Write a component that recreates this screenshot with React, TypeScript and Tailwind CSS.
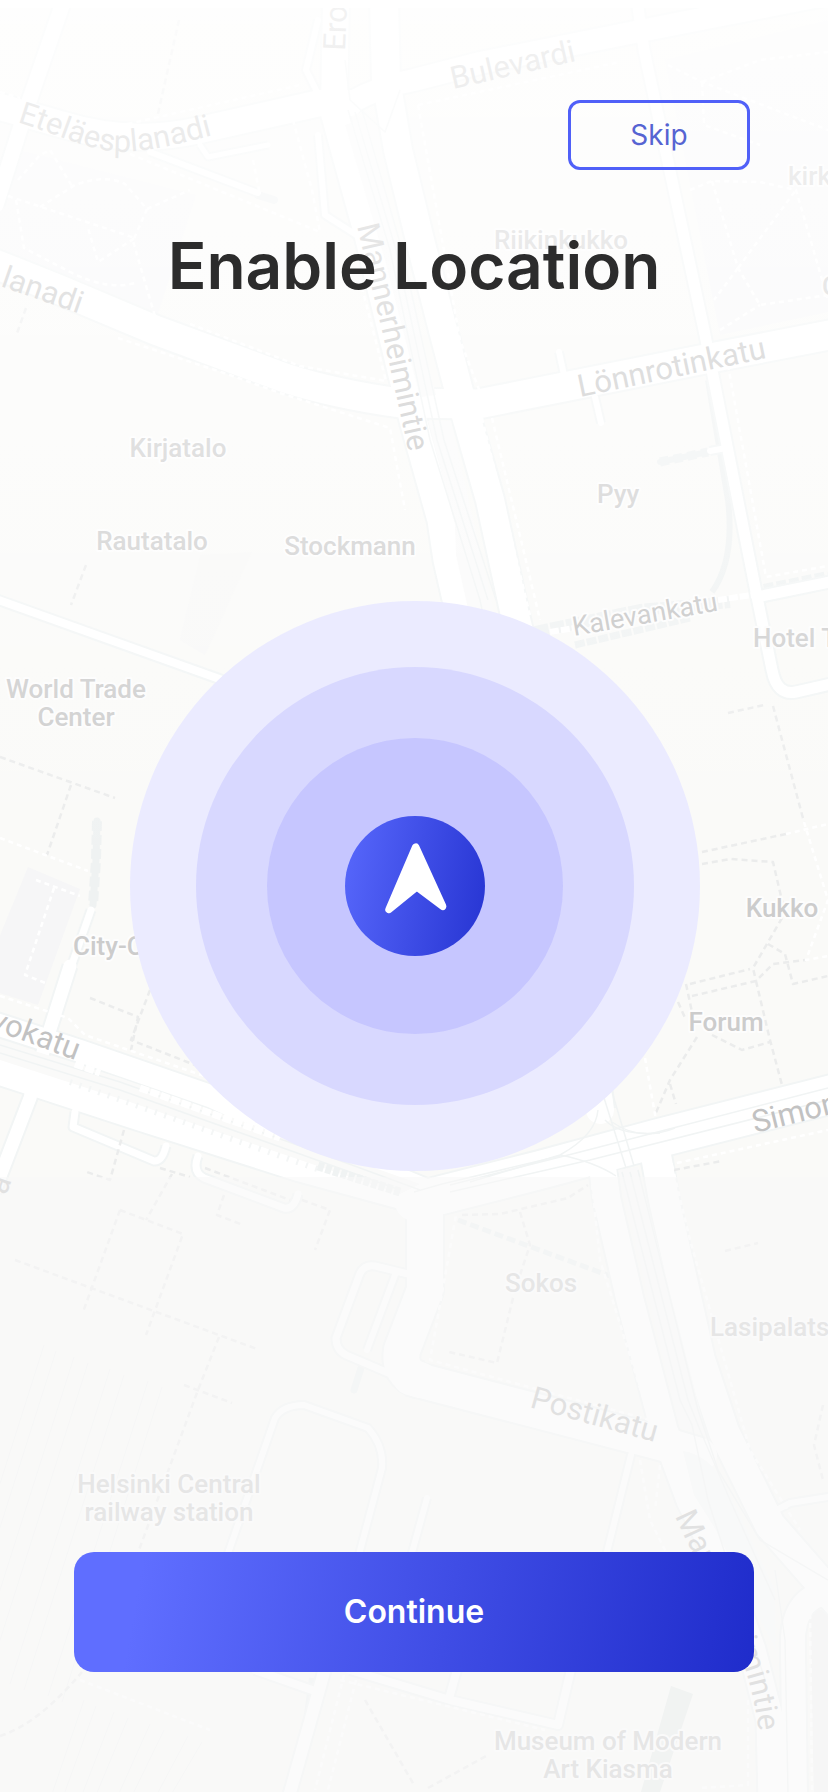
type Road = { d: string; w: number };

const roads: Road[] = [
  { d: "M-10 104 L60 124 Q130 146 200 130 L320 103 L350 103", w: 26 },
  { d: "M350 103 Q380 86 414 80 L480 63 L640 31 L840 -8", w: 22 },
  { d: "M64 0 L26 110 L-4 205", w: 15 },
  { d: "M336 0 L334 110", w: 26 },
  { d: "M320 98 L306 70 L318 20", w: 6 },
  { d: "M150 152 L258 193", w: 6 },
  { d: "M200 145 L208 157 L268 145", w: 5 },
  { d: "M318 135 L325 215 L358 236", w: 6 },
  { d: "M334 112 L368 235 L413 420 L441 520 L447 560 L500 790", w: 27 },
  { d: "M384 0 L386 80 L398 150 L420 240 L443 330 L460 395 L490 500 L515 615 L560 800 L600 1110", w: 28 },
  { d: "M-10 262 L60 290 L155 330 L285 378 Q335 394 400 403 L478 404 L700 360 L840 333", w: 29 },
  { d: "M-10 597 L225 681", w: 8 },
  { d: "M637 0 L644 50 L704 330 L757 597 L772 670 Q777 696 796 692 L840 682", w: 11 },
  { d: "M757 597 L840 580", w: 11 },
  { d: "M559 352 L564 375 M595 397 L601 423 M710 451 L726 448", w: 6 },
  { d: "M91 910 L70 970", w: 7 },
  { d: "M70 966 L45 1045 L30 1098 L-6 1192", w: 13 },
  { d: "M-10 1022 L80 1051 L210 1096 L330 1150 L440 1196", w: 22 },
  { d: "M-10 1069 L140 1118 L300 1169 L414 1200", w: 25 },
  { d: "M840 1092 L659 1138 L540 1170 L414 1202", w: 38 },
  { d: "M75 1112 L73 1127 L154 1161 Q162 1162 166 1146", w: 7 },
  { d: "M198 1156 Q192 1172 204 1178 L284 1208 Q294 1210 298 1194", w: 7 },
  { d: "M425 1210 L425 1290 L402 1350 Q398 1374 420 1380", w: 36 },
  { d: "M410 1378 L660 1443 L700 1455", w: 34 },
  { d: "M600 1150 L607 1200 L630 1300 L664 1430 L690 1500 L722 1565 L752 1650 L770 1720 L772 1800", w: 27 },
  { d: "M655 1150 L664 1200 L700 1360 L724 1432 L770 1525 L840 1605", w: 30 },
  { d: "M795 1800 L793 1650 Q790 1590 840 1592", w: 24 },
  { d: "M408 1274 L375 1266 Q363 1264 359 1276 L336 1338 Q336 1350 346 1355 L400 1378", w: 7 },
  { d: "M395 1275 L367 1350", w: 6 },
  { d: "M225 1562 L275 1418 Q283 1405 304 1405 L368 1428 Q384 1446 382 1468 L357 1562", w: 6 },
  { d: "M326 1665 L288 1800", w: 12 },
  { d: "M255 1670 L312 1690 M350 1670 L450 1700 L558 1725 L572 1665 M450 1695 L457 1670", w: 8 },
  { d: "M631 1455 L606 1556 M775 1511 L790 1503 L840 1495 M427 1498 L410 1560", w: 6 },
];

const greyDashes = [
  "M0 757 L115 798",
  "M71 785 L47 855",
  "M86 565 L71 605",
  "M26 308 L16 336",
  "M179 20 L157 118",
  "M90 998 L138 1017 L131 1050",
  "M150 990 L131 1040 L195 1065",
  "M124 1130 L110 1180 L87 1172",
  "M160 1168 L190 1177 M205 1168 L290 1200",
  "M172 1174 L146 1220 M224 1195 L217 1215 L243 1225",
  "M120 1210 L183 1234 L146 1335 M120 1210 L83 1312",
  "M15 1260 L257 1349",
  "M219 1337 L198 1390 L139 1550",
  "M184 1385 L232 1403",
  "M302 1200 L330 1210 L315 1250",
  "M728 713 L764 705 M773 706 L804 822 M786 834 L702 852",
  "M702 864 L730 859 L773 862 L783 905 M782 918 L753 968 L756 981",
  "M690 984 L750 969 M692 996 L756 981 L773 964 L806 960",
  "M768 944 L785 954 L793 984 L828 976",
  "M756 981 L770 1040 L782 1085",
  "M712 1035 L742 1050 L770 1042 M697 1037 L670 1080 L655 1115 M670 1084 L676 1104",
  "M678 1002 L686 1020 M686 984 L692 1012",
  "M674 1170 L722 1161",
  "M725 1251 L758 1243",
  "M462 1215 L500 1214 L568 1198 L588 1185",
  "M520 1212 L530 1245 L515 1290 L497 1363 L449 1352",
  "M823 1405 L814 1445 L823 1480",
  "M0 1736 Q38 1724 82 1672",
  "M365 1700 L414 1785",
  "M428 1788 L488 1755",
];

const whiteDashes = [
  "M0 92 L20 98 M55 5 L38 80",
  "M18 180 L40 155 L50 150 L72 186",
  "M40 207 L75 185 Q105 174 125 184 L147 209 L133 241 L156 320",
  "M8 196 L135 238 L98 262 L88 228",
  "M16 200 L24 248 L70 272 Q110 292 138 282",
  "M147 209 L190 190 M130 154 L320 232",
  "M110 128 L300 85 M293 120 L312 190 L320 232",
  "M253 160 L260 195",
  "M118 338 L230 375 L280 393 L390 428 L405 510",
  "M190 324 L300 366 L386 381 L360 280",
  "M418 105 L460 340 L480 392 L640 360",
  "M418 105 L620 62",
  "M482 418 L530 615 M492 418 L540 620",
  "M728 365 L766 577 L828 566",
  "M668 65 L702 82 L828 130 M702 82 L704 125 L760 145",
  "M702 82 L760 60 L828 52",
  "M690 190 L712 181 L760 182 L796 190 L828 300",
  "M712 181 L738 268 L760 305 L828 295 M738 268 L796 190",
  "M720 330 L760 305 M738 268 L714 300",
  "M0 838 L88 871 M36 880 L80 896 M54 888 L25 975 L48 984",
  "M0 996 L68 1018 L85 1035 L210 1078",
  "M804 822 L828 900 L806 960 L828 956",
  "M786 834 L828 824",
  "M645 1058 L656 1120 M668 1165 L828 1130",
  "M672 1165 L690 1240 L720 1345 L750 1450 L800 1530",
  "M592 1185 L600 1260 L650 1420 L430 1360 L456 1215",
  "M640 1460 L650 1520 L670 1560 M660 1465 L655 1510",
  "M80 1680 L210 1730",
  "M344 1675 L315 1790 M356 1680 L328 1790 M340 1680 L545 1730",
  "M748 1700 L748 1785 L700 1788 M810 1605 L812 1792",
];

const tramLines = [
  "M348 110 L390 250 L430 440 L480 600 L520 790",
  "M355 112 L396 250 L437 440 L488 600",
  "M362 110 L402 250 L444 440 L496 600",
  "M0 1045 L120 1082 L300 1146 L420 1190",
  "M0 1053 L120 1090 L300 1154 L400 1190",
  "M450 1185 L580 1152 L828 1088 M450 1192 L590 1160 L828 1100",
  "M600 1085 L626 1168 M610 1085 L634 1166",
  "M598 1110 Q596 1135 560 1155 L470 1182 M605 1120 Q620 1136 660 1133",
  "M612 1122 Q640 1142 675 1128 M560 1155 Q595 1162 616 1176",
  "M622 1172 L680 1400 L692 1425 L708 1500 L765 1680",
  "M630 1172 L688 1400 L700 1430 L730 1500 L775 1600",
  "M638 1170 L698 1410 L718 1470 L760 1540 L828 1580",
  "M414 1192 L442 1184 L560 1156",
  "M775 1570 L785 1640 L788 1792",
  "M345 60 L350 100 L385 132 L400 90",
];

const railLines = [0, 12, 30, 44, 66, 80, 104, 118];

type Label = { x: number; y: number; lines: string[]; start?: boolean };

const places: Label[] = [
  { x: 561, y: 249, lines: ["Riikinkukko"] },
  { x: 178, y: 457, lines: ["Kirjatalo"] },
  { x: 152, y: 550, lines: ["Rautatalo"] },
  { x: 350, y: 555, lines: ["Stockmann"] },
  { x: 76, y: 698, lines: ["World Trade", "Center"] },
  { x: 73, y: 955, lines: ["City-Center"], start: true },
  { x: 618, y: 503, lines: ["Pyy"] },
  { x: 753, y: 647, lines: ["Hotel Torni"], start: true },
  { x: 782, y: 917, lines: ["Kukko"] },
  { x: 726, y: 1031, lines: ["Forum"] },
  { x: 788, y: 185, lines: ["kirkko"], start: true },
  { x: 822, y: 295, lines: ["C"], start: true },
  { x: 541, y: 1292, lines: ["Sokos"] },
  { x: 710, y: 1336, lines: ["Lasipalatsi"], start: true },
  { x: 169, y: 1493, lines: ["Helsinki Central", "railway station"] },
  { x: 608, y: 1750, lines: ["Museum of Modern", "Art Kiasma"] },
];

const streets = [
  { id: "etela", d: "M17 122 C60 135 90 152 125 152 C160 150 190 141 240 128", name: "Eteläesplanadi" },
  { id: "bulevardi", d: "M453 89 L620 51", name: "Bulevardi" },
  { id: "erottaja", d: "M345 51 L352 -120", name: "Erottaja" },
  { id: "manner-north", d: "M357 226 L383 335 L415 480", name: "Mannerheimintie" },
  { id: "esplanadi", d: "M0 286 L120 328", name: "lanadi" },
  { id: "lonnrot", d: "M580 397 L800 351", name: "Lönnrotinkatu" },
  { id: "yrjonkatu", d: "M-11 1028 L120 1077", name: "vokatu" },
  { id: "simon", d: "M755 1133 L960 1082", name: "Simonkatu" },
  { id: "posti", d: "M529 1407 L690 1452", name: "Postikatu" },
  { id: "manner-south", d: "M675 1516 C705 1585 752 1645 760 1745", name: "Mannerheimintie" },
];

function CityMap() {
  return (
    <svg
      aria-hidden="true"
      className="absolute inset-0 h-full w-full"
      viewBox="0 0 828 1792"
      preserveAspectRatio="xMidYMin slice"
      fill="none"
      strokeLinejoin="round"
    >
      <defs>
        <linearGradient id="top-fade" x1="0" y1="8" x2="0" y2="880" gradientUnits="userSpaceOnUse">
          <stop offset="0" stopColor="#fff" stopOpacity="0.8" />
          <stop offset="1" stopColor="#fff" stopOpacity="0" />
        </linearGradient>
      </defs>
      <rect width="828" height="1792" fill="#fafaf8" />

      <path d="M20 150 L196 195 L156 320 L0 262 L0 210Z" fill="#f7f7f8" />
      <path d="M665 60 L828 20 L828 312 L720 335Z" fill="#f7f7f8" />
      <path d="M28 867 L80 889 L38 1005 L-4 992 L-4 945Z" fill="#f6f6f7" />
      <path d="M810 1610 H828 V1792 H814Z" fill="#f2f2f2" />
      <path d="M671 1686 L693 1694 L660 1792 L641 1792Z" fill="#e6ebea" />
      <path d="M200 555 L252 552 L205 655 L180 640Z" fill="#f8f8f7" />

      <g stroke="#f3f4f4" strokeWidth="1">
        {railLines.map((x, i) => (
          <path key={x} d={`M${44 + x} ${1345 + i * 6} L${x - 56} ${1660 + i * 6} M${84 + x} ${1700 + i * 6} L${50 + x} 1800`} />
        ))}
      </g>

      <g stroke="#eff2f2">
        <path d="M97 821 L96 860 L93 905" strokeWidth="7" strokeLinecap="round" />
        <path d="M97 821 L96 860 L93 905" strokeWidth="10" strokeDasharray="10 4" />
        <path d="M660 462 L708 452" strokeWidth="6" strokeLinecap="round" />
        <path d="M660 462 L708 452" strokeWidth="9" strokeDasharray="9 5" />
        <path d="M708 380 L728 500 Q735 560 712 592" strokeWidth="6" />
        <path d="M535 632 L640 610 L730 602" strokeWidth="12" strokeDasharray="14 2" />
        <path d="M575 645 L690 618" strokeWidth="7" strokeDasharray="10 2" />
        <path d="M764 589 L828 576" strokeWidth="10" strokeDasharray="10 3" />
        <path d="M258 195 L274 200" strokeWidth="8" strokeLinecap="round" />
        <path d="M361 1368 L354 1390" strokeWidth="7" strokeLinecap="round" />
        <path d="M312 1678 L307 1715" strokeWidth="6" />
      </g>
      <path d="M458 1220 L610 1276" stroke="#edf0f0" strokeWidth="5" strokeDasharray="9 4" />

      <g stroke="#f2f5f5">
        {roads.map((r) => (
          <path key={r.d} d={r.d} strokeWidth={r.w + 4} />
        ))}
      </g>
      <g stroke="#fff" strokeLinecap="round">
        {roads.map((r) => (
          <path key={r.d} d={r.d} strokeWidth={r.w} />
        ))}
      </g>

      <path d="M345 125 L366 118 L412 300 L436 395 L420 397 L385 260Z" fill="#fafafa" />
      <path d="M428 421 L451 421 L500 640 L475 640 L456 555 L455 525Z" fill="#fafafa" />
      <path d="M0 1040 L120 1078 L420 1184 L400 1194 L130 1102 L0 1060Z" fill="#fafaf9" />
      <path d="M618 1170 L638 1167 L706 1434 L680 1428Z" fill="#f9f9f9" />
      <path d="M683 1451 Q708 1455 724 1482 L775 1590 L776 1650 L760 1620 L716 1530 L694 1495Z" fill="#f8f9f9" />

      <g stroke="#f1f4f4" strokeWidth="1.5">
        {tramLines.map((d) => (
          <path key={d} d={d} />
        ))}
      </g>
      <path d="M75 1064 L100 1073 M140 1088 L280 1138" stroke="#fff" strokeWidth="7" strokeDasharray="9 2" />
      <path d="M70 1082 L320 1170" stroke="#f4f6f6" strokeWidth="6" strokeDasharray="2 8" />
      <path d="M318 1166 L400 1192" stroke="#f0f3f3" strokeWidth="9" strokeDasharray="6 2" />
      <path d="M550 632 L580 627 M718 600 L752 595" stroke="#fff" strokeWidth="6" strokeDasharray="9 2" />

      <g stroke="#ebecec" strokeWidth="2.5" strokeDasharray="6 4">
        {greyDashes.map((d) => (
          <path key={d} d={d} />
        ))}
      </g>
      <g stroke="#fff" strokeWidth="2.5" strokeDasharray="5 4">
        {whiteDashes.map((d) => (
          <path key={d} d={d} />
        ))}
      </g>

      <g className="font-['Roboto',sans-serif] text-[26px] font-medium" fill="#cccccc" stroke="#fdfdfd" strokeWidth="4" paintOrder="stroke">
        {places.map((p) => (
          <text key={p.lines[0]} textAnchor={p.start ? "start" : "middle"}>
            {p.lines.map((line, i) => (
              <tspan key={line} x={p.x} y={p.y + i * 28}>
                {line}
              </tspan>
            ))}
          </text>
        ))}
      </g>
      {streets.map((s) => (
        <path key={s.id} id={s.id} d={s.d} />
      ))}
      <g className="font-['Roboto',sans-serif] text-[31px]" fill="#c2c2c2">
        {streets.map((s) => (
          <text key={s.id}>
            <textPath href={`#${s.id}`}>{s.name}</textPath>
          </text>
        ))}
        <text transform="translate(6 1196) rotate(-70)">a</text>
        <text className="text-[27px]" transform="translate(574 636) rotate(-10)" stroke="#fdfdfd" strokeWidth="4" paintOrder="stroke">
          Kalevankatu
        </text>
      </g>

      <rect y="8" width="828" height="872" fill="url(#top-fade)" />
      <rect y="1177" width="828" height="615" fill="#f8f8f8" fillOpacity="0.58" />
      <rect width="828" height="8" fill="#fff" />
    </svg>
  );
}

function LocationPulse() {
  return (
    <div className="flex size-[570px] shrink-0 items-center justify-center rounded-full bg-[#ebebff]">
      <div className="flex size-[438px] items-center justify-center rounded-full bg-[#d8d8ff]">
        <div className="flex size-[296px] items-center justify-center rounded-full bg-[#c6c6ff]">
          <div className="size-[140px] rounded-full bg-[linear-gradient(100deg,#5868fc_0%,#2634d2_100%)]">
            <svg viewBox="0 0 140 140" className="size-full" aria-hidden="true">
              <path
                d="M70.7 31 L44 93.5 L71.7 70.8 L97.7 90.4 Z"
                fill="#fff"
                stroke="#fff"
                strokeWidth="7.4"
                strokeLinejoin="round"
              />
            </svg>
          </div>
        </div>
      </div>
    </div>
  );
}

export default function App() {
  return (
    <main className="relative flex min-h-screen flex-col overflow-hidden bg-[#f9f9f9] px-[74px] pt-[100px] pb-[120px] font-['Inter',sans-serif]">
      <CityMap />
      <header className="relative flex flex-col">
        <button
          type="button"
          className="mr-1 h-[70px] w-[182px] self-end rounded-xl border-3 border-[#5060f8] text-[28px] text-[#5664d2]"
        >
          Skip
        </button>
        <h1 className="mt-14 text-center text-[64px] leading-20 font-semibold text-[#2c2c2c]">Enable Location</h1>
      </header>
      <section className="relative flex flex-1 items-center justify-center pb-[86px] pl-0.5">
        <LocationPulse />
      </section>
      <button
        type="button"
        className="relative h-[120px] rounded-[20px] bg-[linear-gradient(100deg,#5f6eff_10%,#1f2ccb_100%)] text-[32px] font-semibold text-white"
      >
        Continue
      </button>
    </main>
  );
}
